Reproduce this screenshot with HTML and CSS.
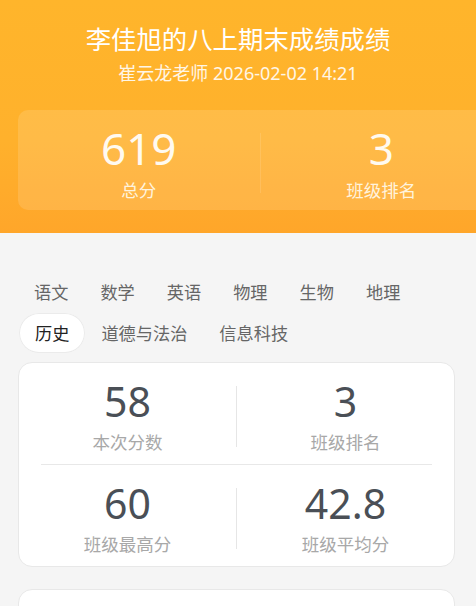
FILE: index.html
```html
<!DOCTYPE html>
<html>
<head>
  <title>成绩详情</title>
  <link rel="stylesheet" href="styles.css">
</head>
<body>
  <div class="header">
    <h1 class="title">李佳旭的八上期末成绩成绩</h1>
    <div class="subtitle">崔云龙老师 2026-02-02 14:21</div>

    <div class="summary">
      <div class="summary-item">
        <div class="summary-num">619</div>
        <div class="summary-label">总分</div>
      </div>
      <div class="summary-line"></div>
      <div class="summary-item">
        <div class="summary-num">3</div>
        <div class="summary-label">班级排名</div>
      </div>
    </div>
  </div>

  <div class="content">
    <!-- subject tabs -->
    <div class="tabs">
      <span class="tab">语文</span>
      <span class="tab">数学</span>
      <span class="tab">英语</span>
      <span class="tab">物理</span>
      <span class="tab">生物</span>
      <span class="tab">地理</span>
      <span class="tab active">历史</span>
      <span class="tab">道德与法治</span>
      <span class="tab">信息科技</span>
    </div>

    <div class="card">
      <div class="stat-row">
        <div class="stat">
          <div class="stat-num">58</div>
          <div class="stat-label">本次分数</div>
        </div>
        <div class="stat-line"></div>
        <div class="stat">
          <div class="stat-num">3</div>
          <div class="stat-label">班级排名</div>
        </div>
      </div>
      <div class="row-line"></div>
      <div class="stat-row">
        <div class="stat">
          <div class="stat-num">60</div>
          <div class="stat-label">班级最高分</div>
        </div>
        <div class="stat-line"></div>
        <div class="stat">
          <div class="stat-num">42.8</div>
          <div class="stat-label">班级平均分</div>
        </div>
      </div>
    </div>

    <div class="card card-next"></div>
  </div>
</body>
</html>
```

FILE: styles.css
```css
html, body {
  margin: 0;
  padding: 0;
  overflow-x: hidden;
}
body {
  font-family: "Noto Sans", "Noto Sans CJK SC", sans-serif;
  background: #f5f5f5;
  color: #333;
}

.header {
  background: linear-gradient(180deg, #ffb52b 0%, #ffb12c 60%, #ffa62a 100%);
  padding: 22px 0 23px;
  color: #fff;
  text-align: center;
}
.title {
  margin: 0;
  font-size: 25.4px;
  font-weight: normal;
  line-height: 32px;
  font-family: "Noto Sans CJK SC", sans-serif;
}
.subtitle {
  margin-top: 7px;
  font-size: 18px;
  line-height: 24px;
  color: #fff6e6;
}

.summary {
  display: flex;
  align-items: center;
  margin: 25px -26px 0 18px;
  padding: 14px 0 8px;
  border-radius: 10px;
  background: rgba(255, 255, 255, 0.13);
}
.summary-item {
  flex: 1;
}
.summary-line {
  width: 1px;
  height: 60px;
  background: rgba(255, 255, 255, 0.12);
}
.summary-num {
  font-size: 44px;
  line-height: 48px;
  color: #fffaf0;
}
.summary-label {
  font-size: 17.5px;
  line-height: 24px;
  margin-top: 6px;
  color: #fff3dd;
  font-family: "Noto Sans CJK SC", sans-serif;
}

.content {
  padding: 39px 21px 0 18px;
}
.tabs {
  display: flex;
  flex-wrap: wrap;
}
.tab {
  height: 40px;
  line-height: 40px;
  padding: 0 16px;
  font-size: 17.2px;
  color: #666;
  border-radius: 21px;
  font-family: "Noto Sans CJK SC", sans-serif;
}
.tabs .tab:nth-child(n+7) {
  margin-top: 1px;
}
.tab.active {
  background: #fff;
  box-shadow: inset 0 0 0 1px #ebebeb;
  color: #222;
  margin-left: 1px;
}

.card {
  margin-top: 9px;
  background: #fff;
  border: 1px solid #e8e8e8;
  border-radius: 14px;
}
.stat-row {
  display: flex;
  align-items: center;
  padding: 15px 0 10px;
}
.stat {
  flex: 1;
  text-align: center;
}
.stat-line {
  width: 1px;
  height: 61px;
  background: #e6e6e6;
}
.row-line {
  height: 1px;
  margin: 0 22px;
  background: #e8e8e8;
}
.stat-num {
  font-size: 41px;
  line-height: 46px;
  color: #4a4f56;
}
.stat-label {
  margin-top: 6px;
  font-size: 17.5px;
  line-height: 24px;
  color: #a8a8a8;
  font-family: "Noto Sans CJK SC", sans-serif;
}

.card-next {
  margin-top: 22px;
  height: 60px;
}
```
